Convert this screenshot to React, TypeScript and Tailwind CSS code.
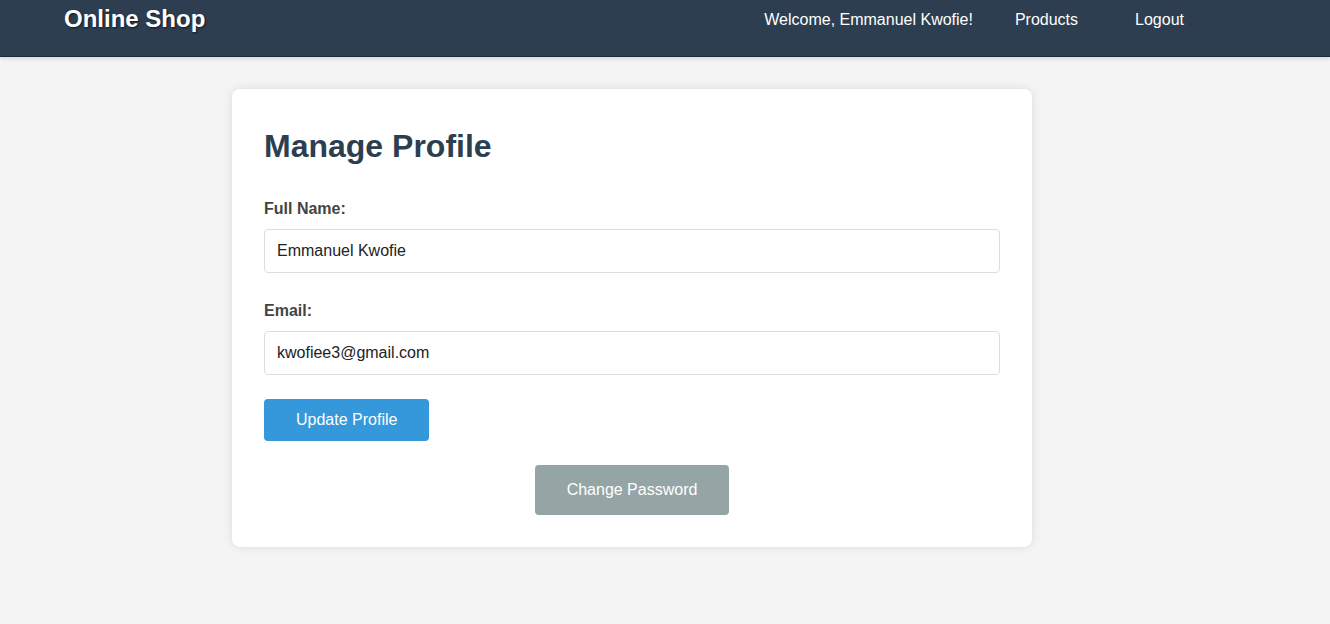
export default function App() {
  return (
    <div className="min-h-screen bg-[#f4f4f4] font-['Liberation_Sans',Arial,sans-serif] text-[#333]">
      {/* Header */}
      <header className="h-[57px] bg-[#2c3e50] border-b border-[#1c2b3a] shadow-[0_2px_4px_rgba(0,0,0,0.12)]">
        <div className="flex items-start justify-between pl-16">
          <h1 className="pt-[5px] text-2xl leading-[28px] font-bold text-white [text-shadow:1px_1px_2px_rgba(0,0,0,0.6)]">
            Online Shop
          </h1>
          <nav className="flex items-start pt-[11px] text-base leading-[18px] text-white">
            <span className="mr-[42px]">Welcome, Emmanuel Kwofie!</span>
            <a href="#" className="mr-[57px]">
              Products
            </a>
            <a href="#" className="mr-[146px]">
              Logout
            </a>
          </nav>
        </div>
      </header>

      {/* Main Content */}
      <main className="pt-[32px]">
        <div className="ml-[232px] w-[800px] rounded-lg bg-white px-8 pt-[39px] pb-8 shadow-[0_0_10px_rgba(0,0,0,0.1)]">
          <h2 className="mb-[35px] text-[32px] leading-[37px] font-bold text-[#2c3e50]">
            Manage Profile
          </h2>

          <form onSubmit={(e) => e.preventDefault()}>
            <div className="mb-[29px]">
              <label className="mb-[11px] block text-base leading-[18px] font-bold text-[#444]">
                Full Name:
              </label>
              <input
                type="text"
                defaultValue="Emmanuel Kwofie"
                className="block h-[44px] w-full rounded border border-[#ddd] px-3 text-base text-[#222] outline-none"
              />
            </div>

            <div className="mb-6">
              <label className="mb-[11px] block text-base leading-[18px] font-bold text-[#444]">
                Email:
              </label>
              <input
                type="email"
                defaultValue="kwofiee3@gmail.com"
                className="block h-[44px] w-full rounded border border-[#ddd] px-3 text-base text-[#222] outline-none"
              />
            </div>

            <button
              type="submit"
              className="h-[42px] rounded bg-[#3498db] px-8 text-base leading-[18px] text-white"
            >
              Update Profile
            </button>
          </form>

          <div className="mt-6 flex justify-center">
            <button className="h-[50px] w-[194px] rounded bg-[#95a5a6] text-base leading-[18px] text-white">
              Change Password
            </button>
          </div>
        </div>
      </main>
    </div>
  );
}
